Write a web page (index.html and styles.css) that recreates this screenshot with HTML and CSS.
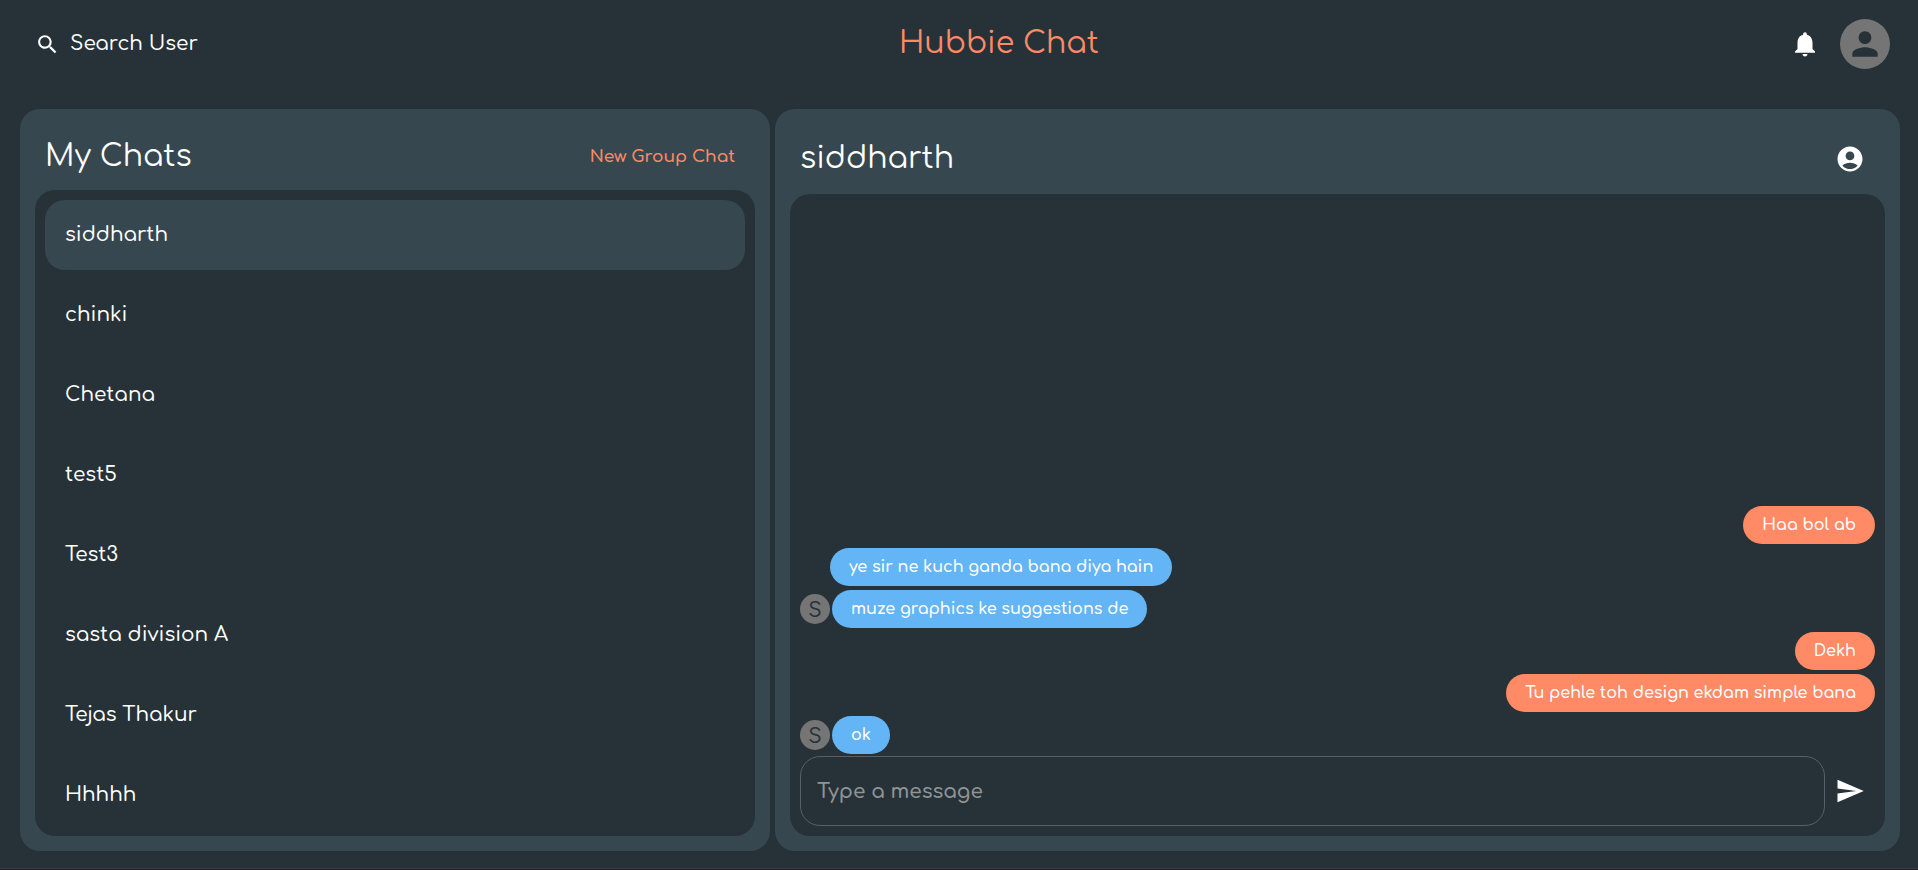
FILE: index.html
```html
<!DOCTYPE html>
<html lang="en">
<head>
<meta charset="utf-8">
<title>Hubbie Chat</title>
<link rel="stylesheet" href="styles.css">
</head>
<body>
<div class="app">
  <header class="topbar">
    <button class="search" type="button">
      <svg class="icon-search" viewBox="0 0 24 24" aria-hidden="true"><path d="M15.5 14h-.79l-.28-.27C15.41 12.59 16 11.11 16 9.5 16 5.91 13.09 3 9.5 3S3 5.91 3 9.5 5.91 16 9.5 16c1.61 0 3.09-.59 4.23-1.57l.27.28v.79l5 4.99L20.49 19l-4.99-5zm-6 0C7.01 14 5 11.99 5 9.5S7.01 5 9.5 5 14 7.01 14 9.5 11.99 14 9.5 14z"/></svg>
      <span>Search User</span>
    </button>
    <h1 class="brand">Hubbie Chat</h1>
    <div class="account">
      <button class="icon-button" type="button" aria-label="Notifications">
        <svg class="icon" viewBox="0 0 24 24" aria-hidden="true"><path d="M12 22c1.1 0 2-.9 2-2h-4c0 1.1.89 2 2 2zm6-6v-5c0-3.07-1.64-5.64-4.5-6.32V4c0-.83-.67-1.5-1.5-1.5s-1.5.67-1.5 1.5v.68C7.63 5.36 6 7.92 6 11v5l-2 2v1h16v-1l-2-2z"/></svg>
      </button>
      <button class="profile" type="button" aria-label="Profile">
        <svg class="icon-person" viewBox="0 0 24 24" aria-hidden="true"><path d="M12 12c2.21 0 4-1.79 4-4s-1.79-4-4-4-4 1.79-4 4 1.79 4 4 4zm0 2c-2.67 0-8 1.34-8 4v2h16v-2c0-2.66-5.33-4-8-4z"/></svg>
      </button>
    </div>
  </header>
  <main class="panels">
    <section class="panel">
      <div class="panel-head">
        <h2 class="panel-title">My Chats</h2>
        <button class="new-group" type="button">New Group Chat</button>
      </div>
      <nav class="chat-list" aria-label="Chats">
        <button class="chat chat-active" type="button">siddharth</button>
        <button class="chat" type="button">chinki</button>
        <button class="chat" type="button">Chetana</button>
        <button class="chat" type="button">test5</button>
        <button class="chat" type="button">Test3</button>
        <button class="chat" type="button">sasta division A</button>
        <button class="chat" type="button">Tejas Thakur</button>
        <button class="chat" type="button">Hhhhh</button>
      </nav>
    </section>
    <section class="panel">
      <div class="panel-head panel-head-chat">
        <h2 class="panel-title">siddharth</h2>
        <button class="icon-button" type="button" aria-label="View contact">
          <svg class="icon" viewBox="0 0 24 24" aria-hidden="true"><path d="M12 2C6.48 2 2 6.48 2 12s4.48 10 10 10 10-4.48 10-10S17.52 2 12 2zm0 4c1.93 0 3.5 1.57 3.5 3.5S13.93 13 12 13s-3.5-1.57-3.5-3.5S10.07 6 12 6zm0 14c-2.03 0-4.43-.82-6.14-2.88C7.55 15.8 9.68 15 12 15s4.45.8 6.14 2.12C16.43 19.18 14.03 20 12 20z"/></svg>
        </button>
      </div>
      <div class="conversation">
        <div class="messages">
          <div class="message sent"><p class="bubble">Haa bol ab</p></div>
          <div class="message follow"><p class="bubble">ye sir ne kuch ganda bana diya hain</p></div>
          <div class="message"><span class="avatar">S</span><p class="bubble">muze graphics ke suggestions de</p></div>
          <div class="message sent"><p class="bubble">Dekh</p></div>
          <div class="message sent"><p class="bubble">Tu pehle toh design ekdam simple bana</p></div>
          <div class="message"><span class="avatar">S</span><p class="bubble">ok</p></div>
        </div>
        <form class="composer">
          <input class="composer-input" type="text" placeholder="Type a message" aria-label="Type a message">
          <button class="icon-button" type="button" aria-label="Send">
            <svg class="icon" viewBox="0 0 24 24" aria-hidden="true"><path d="M2.01 21L23 12 2.01 3 2 10l15 2-15 2z"/></svg>
          </button>
        </form>
      </div>
    </section>
  </main>
</div>
</body>
</html>
```
FILE: styles.css
```css
* {
  box-sizing: border-box;
}

body {
  margin: 0;
  background: #211f26;
  color: #fff;
  font-family: Comfortaa, Inter, sans-serif;
  font-weight: 500;
}

h1,
h2,
p {
  margin: 0;
}

h1,
h2 {
  font-weight: 400;
}

button,
input {
  margin: 0;
  padding: 0;
  border: 0;
  background: none;
  color: inherit;
  font: inherit;
}

button {
  cursor: pointer;
}

svg {
  display: block;
  fill: currentColor;
}

.app {
  display: flex;
  flex-direction: column;
  height: calc(100vh - 1px);
  padding: 0 18px 17px 20px;
  border-bottom: 1px solid #453a3b;
  background: #263238;
}

.topbar {
  display: flex;
  align-items: center;
  justify-content: space-between;
  flex: none;
  height: 88px;
  margin-bottom: 21px;
}

.search {
  display: flex;
  align-items: center;
  gap: 10px;
  padding: 8px 20px 8px 15px;
  font-size: 20px;
  line-height: 26px;
}

.icon-search {
  width: 25px;
  height: 25px;
}

.brand {
  color: #ff8a65;
  font-size: 30px;
  line-height: 40px;
}

.account {
  display: flex;
  align-items: center;
  gap: 10px;
  padding-right: 10px;
}

.icon-button {
  display: grid;
  place-items: center;
  flex: none;
  width: 50px;
  height: 50px;
}

.icon {
  width: 30px;
  height: 30px;
}

.profile {
  display: grid;
  place-items: center;
  width: 50px;
  height: 50px;
  border-radius: 50%;
  background: #757575;
  color: #263238;
}

.icon-person {
  width: 38px;
  height: 38px;
}

.panels {
  display: grid;
  grid-template-columns: 2fr 3fr;
  gap: 5px;
  flex: 1;
  min-height: 0;
}

.panel {
  display: flex;
  flex-direction: column;
  min-width: 0;
  min-height: 0;
  padding: 15px;
  border-radius: 20px;
  background: #37474f;
}

.panel-head {
  display: flex;
  align-items: center;
  justify-content: space-between;
  flex: none;
  height: 66px;
  padding: 0 20px 0 10px;
}

.panel-head-chat {
  height: 70px;
  padding-right: 10px;
}

.panel-title {
  font-size: 30px;
  line-height: 40px;
}

.new-group {
  color: #ff8a65;
  font-size: 17px;
  font-weight: 600;
  line-height: 24px;
}

.chat-list {
  display: flex;
  flex-direction: column;
  gap: 10px;
  flex: 1;
  min-height: 0;
  padding: 10px;
  overflow: hidden;
  border-radius: 20px;
  background: #263238;
}

.chat {
  flex: none;
  height: 70px;
  padding: 0 20px 2px;
  border-radius: 20px;
  font-size: 20px;
  text-align: left;
}

.chat-active {
  background: #37474f;
}

.conversation {
  display: flex;
  flex-direction: column;
  flex: 1;
  min-height: 0;
  padding: 10px;
  border-radius: 20px;
  background: #263238;
}

.messages {
  display: flex;
  flex-direction: column;
  justify-content: flex-end;
  gap: 4px;
  flex: 1;
  min-height: 0;
  padding-bottom: 2px;
  overflow: hidden;
}

.message {
  display: flex;
  align-items: center;
  gap: 2px;
}

.follow {
  padding-left: 30px;
}

.sent {
  justify-content: flex-end;
}

.avatar {
  width: 30px;
  height: 30px;
  border-radius: 50%;
  background: #757575;
  color: #263238;
  font-size: 20px;
  line-height: 34px;
  text-align: center;
}

.bubble {
  padding: 7px 19px;
  border-radius: 20px;
  background: #64b5f6;
  font-size: 16px;
  font-weight: 600;
  line-height: 24px;
}

.sent .bubble {
  background: #ff8a65;
}

.composer {
  display: flex;
  align-items: center;
  flex: none;
}

.composer-input {
  flex: 1;
  min-width: 0;
  height: 70px;
  padding: 0 16px;
  border: 1px solid #576065;
  border-radius: 20px;
  font-size: 20px;
  font-weight: 600;
}

.composer-input::placeholder {
  color: #8f9497;
  opacity: 1;
}
```
